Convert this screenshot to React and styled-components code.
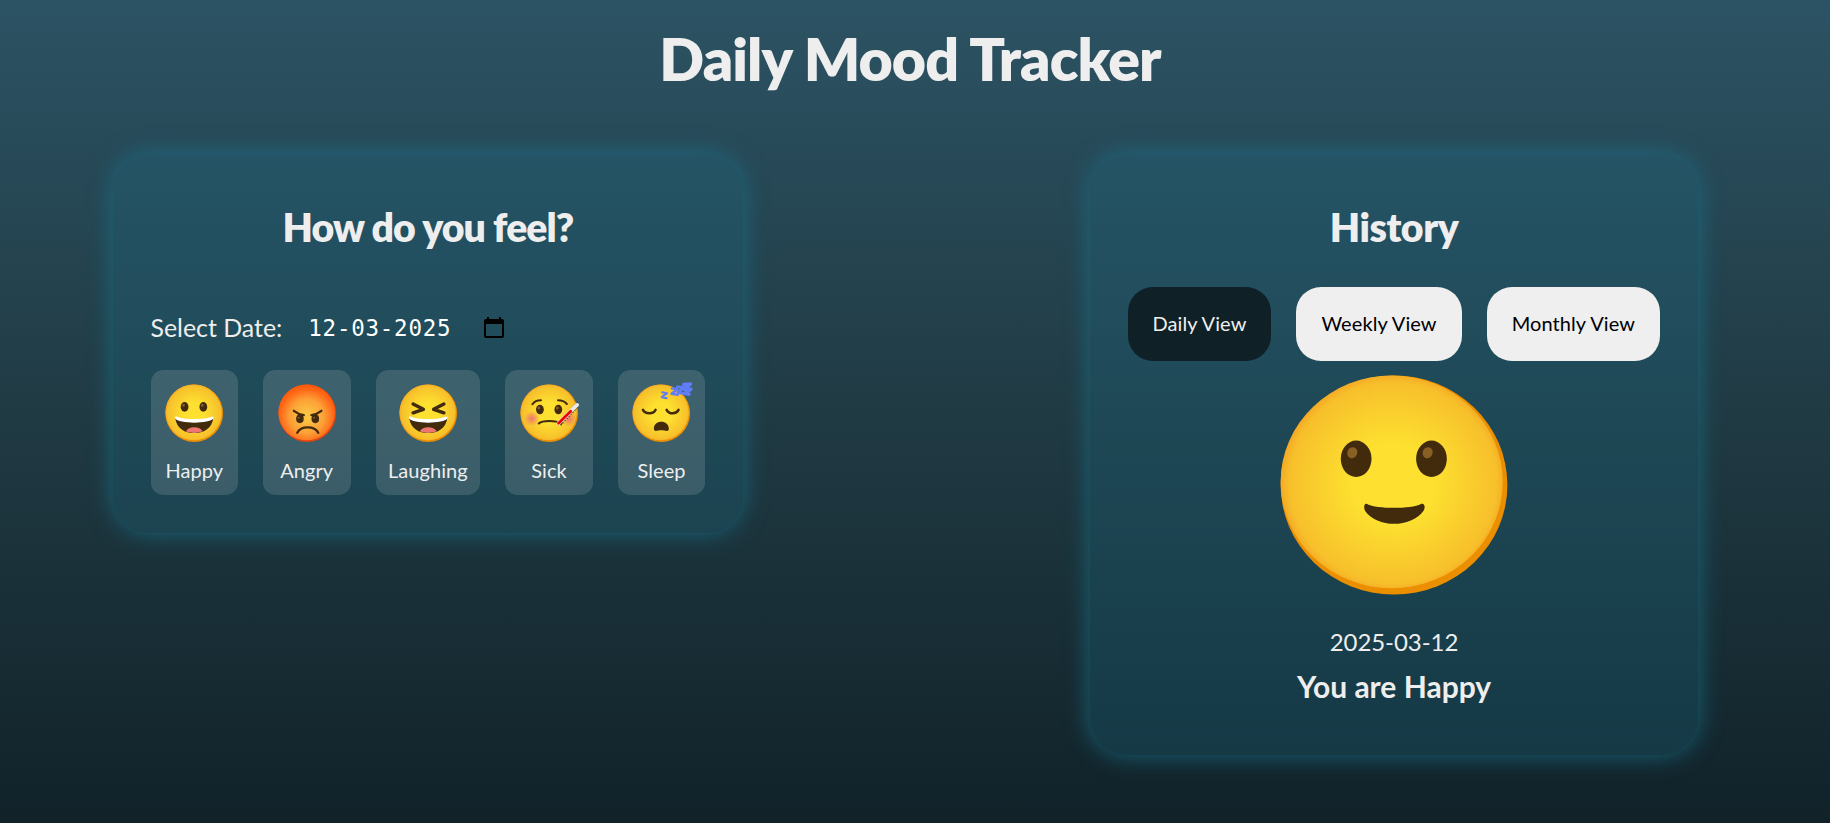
import React, { useId, useState } from "react";
import styled, { createGlobalStyle } from "styled-components";

const GlobalStyle = createGlobalStyle`
  * { box-sizing: border-box; }
  body {
    margin: 0;
    font-family: Lato, "Liberation Sans", sans-serif;
    color: #eeeeee;
    background: #0f2027;
  }
`;

const Page = styled.main`
  height: 823px;
  overflow: hidden;
  background: linear-gradient(to bottom, #2c5364, #203a43 51%, #112229);
`;

const Title = styled.h1`
  margin: 0;
  padding: 23px 10px 0 0;
  font-size: 59px;
  font-weight: 800;
  line-height: 72px;
  letter-spacing: -0.9px;
  text-align: center;
`;

const Columns = styled.div`
  display: flex;
  justify-content: space-between;
  align-items: flex-start;
  padding: 60px 132px 0 113px;
`;

const Card = styled.section`
  width: ${(p) => p.$width}px;
  height: ${(p) => p.$height}px;
  padding: 48px 37.5px 0;
  border-radius: 37.5px;
  background: rgba(26, 116, 142, 0.25);
  box-shadow: 0 0 25px rgba(26, 116, 142, 0.78);
`;

const Heading = styled.h2`
  margin: 0;
  font-size: 39.2px;
  font-weight: 800;
  line-height: 48px;
  letter-spacing: ${(p) => p.$tracking}px;
  text-align: center;
`;

const DateRow = styled.div`
  display: flex;
  align-items: center;
  height: 32px;
  margin-top: 60px;
  font-size: 24.9px;
`;

const DateField = styled.div`
  display: flex;
  align-items: center;
  justify-content: space-between;
  width: 196px;
  margin-left: 26px;
  padding-top: 1px;
  color: #ffffff;
  font: 22.5px "DejaVu Sans Mono", monospace;
  letter-spacing: 0.75px;
`;

const Moods = styled.div`
  display: flex;
  gap: 25px;
  margin-top: 27px;
`;

const Mood = styled.button`
  display: flex;
  flex-direction: column;
  align-items: center;
  height: 125px;
  padding: 11.5px 12.5px 0;
  border: 0;
  border-radius: 12.5px;
  background: rgba(238, 238, 238, 0.15);
  color: #eeeeee;
  font: 20px/24px Lato, sans-serif;
  letter-spacing: 0.06px;
`;

const MoodLabel = styled.span`
  margin-top: 14px;
`;

const Tabs = styled.div`
  display: flex;
  gap: 25px;
  margin-top: 36px;
`;

const Tab = styled.button`
  height: 74px;
  padding: 0 25px 2px;
  border: 0;
  border-radius: 25px;
  background: ${(p) => (p.$active ? "#0f2027" : "#efefef")};
  color: ${(p) => (p.$active ? "#eeeeee" : "#000000")};
  font: 20px Lato, sans-serif;
  letter-spacing: 0.08px;
  white-space: nowrap;
`;

const Result = styled.div`
  display: flex;
  flex-direction: column;
  align-items: center;
  padding-top: 5px;
`;

const ResultDate = styled.p`
  margin: 23px 0 0;
  font-size: 24px;
  line-height: 30px;
  letter-spacing: -0.05px;
`;

const ResultMood = styled.h3`
  margin: 11px 0 0;
  font-size: 30px;
  font-weight: 700;
  line-height: 36px;
`;

const FaceSvg = styled.svg`
  display: block;
  flex: none;
  overflow: visible;
`;

const INK = "#422b0d";

function Eye({ x, y }) {
  return (
    <g>
      <ellipse cx={x} cy={y} rx="8" ry="9.8" fill={INK} />
      <ellipse cx={x - 2} cy={y - 3.3} rx="2.6" ry="3" fill="#896024" transform={`rotate(20 ${x - 2} ${y - 3.3})`} />
    </g>
  );
}

function Grin() {
  return (
    <g>
      <path d="M25 74 C28 95 45 104.5 64 104.5 S100 95 103 74 C92 79 36 79 25 74Z" fill={INK} />
      <path d="M25 75 C23 70 27 70.500 30 71.500 C48 77.500 80 77.500 98 71.500 C102 70.500 105 71 103 75 C96 86 32 86 25 75Z" fill="#fff" />
      <path d="M47 101 C52 90 76 90 81 101 C70 105.500 57 105.500 47 101Z" fill="#ed7770" />
    </g>
  );
}

const features = {
  smile: (
    <g>
      <Eye x={44.3} y={49.9} />
      <Eye x={83.5} y={49.9} />
      <path d="M50 74.200 C55 77 73 77 78 74.200 C80 73.500 80.500 76 79.300 78 C73 87.200 55 87.200 49 78 C48 76 48.500 73.500 50 74.200Z" fill={INK} />
    </g>
  ),
  happy: (
    <g>
      <Eye x={44.2} y={51} />
      <Eye x={82.6} y={51} />
      <Grin />
    </g>
  ),
  angry: (
    <g>
      <g fill={INK}>
        <ellipse cx="49" cy="75.500" rx="7.800" ry="8.800" />
        <ellipse cx="80.500" cy="75.500" rx="7.800" ry="8.800" />
      </g>
      <g fill="none" stroke={INK} strokeWidth="4.600" strokeLinecap="round" strokeLinejoin="round">
        <path d="M36.500 59 C43 64 50 67 57 68" />
        <path d="M93 59 C86.500 64 79.500 67 72.500 68" />
        <path d="M43.500 104 C51 89.500 79 89.500 86.500 104" />
      </g>
      <circle cx="46.500" cy="73" r="2" fill="#896024" />
      <circle cx="78" cy="73" r="2" fill="#896024" />
    </g>
  ),
  laughing: (
    <g>
      <g fill="none" stroke={INK} strokeWidth="7" strokeLinecap="round" strokeLinejoin="round">
        <path d="M33 45 L54 56 L33 63" />
        <path d="M96 45 L75 56 L96 63" />
      </g>
      <Grin />
    </g>
  ),
  sick: (
    <g>
      <circle cx="28.500" cy="75" r="16" fill="url(#cheek)" />
      <circle cx="104" cy="75" r="16" fill="url(#cheek)" />
      <Eye x={44.9} y={56.5} />
      <Eye x={82.6} y={56.5} />
      <g fill="none" stroke={INK} strokeWidth="4.200" strokeLinecap="round">
        <path d="M29.500 45.500 C33 40.500 39 37.500 47 37.500" />
        <path d="M82 37.500 C90 37.500 96 40.500 100 45" />
        <path d="M42.500 85 C50 78 77 78 89 85" />
      </g>
      <path d="M85 86 L121 47" stroke="#303030" strokeWidth="10" strokeDasharray="2 4" />
      <path d="M83 84.500 L121 47" stroke="#e8e8e8" strokeWidth="8" strokeLinecap="round" />
      <path d="M83 84.500 L108 60" stroke="#f00000" strokeWidth="5.500" strokeLinecap="round" />
      <path d="M112 63 L122 52" stroke="#303030" strokeWidth="2" strokeDasharray="2 4" />
    </g>
  ),
  sleep: (
    <g transform="translate(0 1)">
      <g fill="none" stroke={INK} strokeWidth="5" strokeLinecap="round">
        <path d="M26.500 56 C31 65 48 66 52.500 56" />
        <path d="M75 56 C80 66 95 65 99.500 56" />
      </g>
      <path d="M49 96 C47 75 81 75 79.500 96 C78.500 102 72 98 64 98 S50 102 49 96Z" fill={INK} />
      <g fill="none" stroke="#5f7cf9" strokeLinejoin="round" strokeLinecap="round">
        <path d="M66 20 L76 22 L65 30 L75 32" strokeWidth="4.500" />
        <path d="M86 12 L97 14 L85 23 L98 25" strokeWidth="5" />
        <path d="M97 9 L110 10 L98 20 L112 23" strokeWidth="6" />
        <path d="M110 4 L124 3 L111 14 L125 14 L112 22 L121 24" strokeWidth="7" />
      </g>
    </g>
  ),
};

function Face({ kind, width = 62.5, height = 62.5 }) {
  const id = useId();
  const angry = kind === "angry";
  return (
    <FaceSvg width={width} height={height} viewBox="0 0 128 128" preserveAspectRatio="none" aria-hidden="true">
      <defs>
        <radialGradient id={id} gradientUnits="userSpaceOnUse" cx="63.500" cy={angry ? 70 : 63} r={angry ? 63 : 60}>
          <stop offset={angry ? 0.1 : 0.36} stopColor={angry ? "#fbc543" : "#fde030"} />
          {angry && <stop offset="0.55" stopColor="#fca137" />}
          <stop offset="0.9" stopColor={angry ? "#ff6314" : "#f7c02b"} />
          <stop offset="1" stopColor={angry ? "#ff5a0c" : "#f4a223"} />
        </radialGradient>
        <radialGradient id="cheek">
          <stop offset="0.1" stopColor="#ed7770" stopOpacity="0.9" />
          <stop offset="1" stopColor="#ed7770" stopOpacity="0" />
        </radialGradient>
      </defs>
      <ellipse cx="64" cy="64" rx="59" ry="58.900" fill={angry ? "#e6450f" : "#eb8f00"} />
      <ellipse cx="62.800" cy="62.300" rx="57.800" ry="57.200" fill={`url(#${id})`} />
      {features[kind]}
    </FaceSvg>
  );
}

function CalendarIcon() {
  return (
    <svg width="20" height="22" viewBox="0 0 20 22" aria-hidden="true">
      <path
        fill="#000"
        fillRule="evenodd"
        d="M3 0h2v2h10V0h2v2h1a2 2 0 0 1 2 2v15a2 2 0 0 1-2 2H2a2 2 0 0 1-2-2V4a2 2 0 0 1 2-2h1zM2 7v12h16V7z"
      />
    </svg>
  );
}

const moods = [
  ["happy", "Happy"],
  ["angry", "Angry"],
  ["laughing", "Laughing"],
  ["sick", "Sick"],
  ["sleep", "Sleep"],
];

const views = ["Daily View", "Weekly View", "Monthly View"];

export default function App() {
  const [view, setView] = useState(views[0]);
  return (
    <>
      <GlobalStyle />
      <Page>
        <Title>Daily Mood Tracker</Title>
        <Columns>
          <Card $width={630} $height={378}>
            <Heading $tracking={-0.9}>How do you feel?</Heading>
            <DateRow>
              <span>Select Date:</span>
              <DateField>
                <span>12-03-2025</span>
                <CalendarIcon />
              </DateField>
            </DateRow>
            <Moods>
              {moods.map(([kind, label]) => (
                <Mood key={kind}>
                  <Face kind={kind} />
                  <MoodLabel>{label}</MoodLabel>
                </Mood>
              ))}
            </Moods>
          </Card>
          <Card $width={608} $height={600}>
            <Heading $tracking={-0.45}>History</Heading>
            <Tabs>
              {views.map((name) => (
                <Tab key={name} $active={view === name} onClick={() => setView(name)}>
                  {name}
                </Tab>
              ))}
            </Tabs>
            <Result>
              <Face kind="smile" width={246} height={238} />
              <ResultDate>2025-03-12</ResultDate>
              <ResultMood>You are Happy</ResultMood>
            </Result>
          </Card>
        </Columns>
      </Page>
    </>
  );
}
